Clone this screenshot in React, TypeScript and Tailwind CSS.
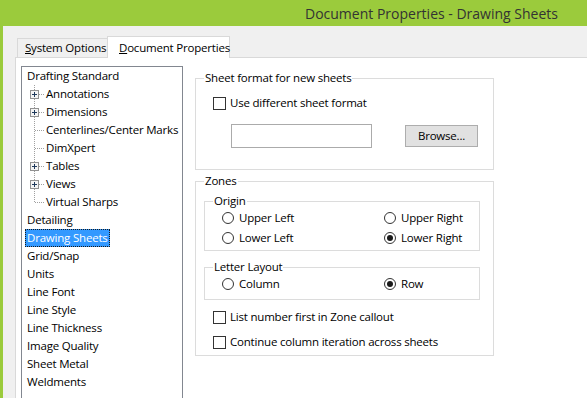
import React from "react";

const children = [
  { label: "Annotations", plus: true },
  { label: "Dimensions", plus: true },
  { label: "Centerlines/Center Marks", plus: false },
  { label: "DimXpert", plus: false },
  { label: "Tables", plus: true },
  { label: "Views", plus: true },
  { label: "Virtual Sharps", plus: false },
];

const rootItems = [
  "Detailing",
  "Drawing Sheets",
  "Grid/Snap",
  "Units",
  "Line Font",
  "Line Style",
  "Line Thickness",
  "Image Quality",
  "Sheet Metal",
  "Weldments",
];

const TreeConnector = ({ plus, last }: { plus: boolean; last: boolean }) => (
  <svg width="22" height="18" className="shrink-0">
    <line
      x1="12.5"
      y1="0"
      x2="12.5"
      y2={last ? 9 : 18}
      stroke="#a0a0a0"
      strokeDasharray="1 1"
    />
    <line x1="13" y1="9.5" x2="22" y2="9.5" stroke="#a0a0a0" strokeDasharray="1 1" />
    {plus && (
      <>
        <rect x="8.5" y="5.5" width="8" height="8" fill="#f4f4f4" stroke="#919191" />
        <line x1="10" y1="9.5" x2="15" y2="9.5" stroke="#1e395b" />
        <line x1="12.5" y1="7" x2="12.5" y2="12" stroke="#1e395b" />
      </>
    )}
  </svg>
);

const CheckBox = ({ label }: { label: string }) => (
  <div className="flex items-center h-[18px]">
    <span className="w-[13px] h-[13px] border border-[#333] bg-white shrink-0" />
    <span className="ml-[4px]">{label}</span>
  </div>
);

const Radio = ({ label, checked }: { label: string; checked?: boolean }) => (
  <div className="flex items-center h-[20px]">
    <span className="w-[12px] h-[12px] rounded-full border border-[#333] bg-white shrink-0 flex items-center justify-center">
      {checked && <span className="w-[6px] h-[6px] rounded-full bg-[#1a1a1a]" />}
    </span>
    <span className="ml-[5px]">{label}</span>
  </div>
);

const GroupLabel = ({ text }: { text: string }) => (
  <span className="absolute -top-[10px] left-[8px] bg-white px-[1px] leading-[18px]">
    {text}
  </span>
);

export default function App() {
  return (
    <div className="w-[587px] h-[398px] overflow-hidden bg-[#f0f0f0] flex flex-col font-['Open_Sans',sans-serif] text-[11.5px] tracking-[-0.2px] text-black">
      <div className="h-[26px] shrink-0 bg-[#9bcb3c] pl-[305px] flex items-center text-[14px] tracking-normal text-[#333] whitespace-nowrap">
        Document Properties - Drawing Sheets
      </div>
      <div className="flex-1 min-h-0 flex flex-col border-l-[3px] border-[#9bcb3c]">
        <div className="h-[31px] shrink-0 pl-[14px] flex items-end">
          <div className="h-[19px] w-[90px] pl-[7px] border-t border-l border-[#d9d9d9] bg-[#f0f0f0] flex items-center whitespace-nowrap">
            <span>
              <span className="underline">S</span>ystem Options
            </span>
          </div>
          <div className="relative z-10 -mb-px h-[22px] w-[123px] pl-[11px] border-t border-l border-r border-[#d9d9d9] bg-white flex items-center whitespace-nowrap">
            <span>
              <span className="underline">D</span>ocument Properties
            </span>
          </div>
        </div>
        <div className="flex-1 min-h-0 ml-[12px] bg-white border-l border-t border-[#d9d9d9] flex items-start">
          {/* tree */}
          <div className="ml-[5px] mt-[8px] w-[162px] h-[400px] shrink-0 border border-[#828790] bg-white pl-[3px] whitespace-nowrap">
            <div className="h-[18px] flex items-center">
              <span className="px-[2px]">Drafting Standard</span>
            </div>
            {children.map((c, i) => (
              <div key={c.label} className="h-[18px] flex items-center -ml-[3px]">
                <TreeConnector plus={c.plus} last={i === children.length - 1} />
                <span className="px-[2px]">{c.label}</span>
              </div>
            ))}
            {rootItems.map((r) => (
              <div key={r} className="h-[18px] flex items-center">
                {r === "Drawing Sheets" ? (
                  <span className="px-[1px] h-[18px] flex items-center bg-[#3399ff] text-white border border-dotted border-[#1a1a1a]">
                    {r}
                  </span>
                ) : (
                  <span className="px-[2px]">{r}</span>
                )}
              </div>
            ))}
          </div>

          {/* options */}
          <div className="ml-[12px] mt-[20px] w-[299px] shrink-0 flex flex-col">
            <div className="relative h-[92px] border border-[#dcdcdc] pt-[15px] pl-[17px]">
              <GroupLabel text="Sheet format for new sheets" />
              <CheckBox label="Use different sheet format" />
              <div className="mt-[12px] h-[24px] flex items-center">
                <div className="ml-[18px] w-[141px] h-[24px] border border-[#ababab] bg-white" />
                <button className="ml-[33px] w-[73px] h-[22px] border border-[#adadad] bg-[#e1e1e1] flex items-center justify-center">
                  Browse...
                </button>
              </div>
            </div>

            <div className="relative mt-[11px] h-[175px] border border-[#dcdcdc] pt-[19px] pl-[8px]">
              <GroupLabel text="Zones" />
              <div className="relative w-[276px] h-[50px] border border-[#dcdcdc] pt-[6px] pl-[17px]">
                <GroupLabel text="Origin" />
                <div className="grid grid-cols-[162px_1fr]">
                  <Radio label="Upper Left" />
                  <Radio label="Upper Right" />
                  <Radio label="Lower Left" />
                  <Radio label="Lower Right" checked />
                </div>
              </div>
              <div className="relative mt-[16px] w-[276px] h-[33px] border border-[#dcdcdc] pt-[6px] pl-[17px]">
                <GroupLabel text="Letter Layout" />
                <div className="grid grid-cols-[162px_1fr]">
                  <Radio label="Column" />
                  <Radio label="Row" checked />
                </div>
              </div>
              <div className="mt-[8px] ml-[9px]">
                <CheckBox label="List number first in Zone callout" />
              </div>
              <div className="mt-[7px] ml-[9px]">
                <CheckBox label="Continue column iteration across sheets" />
              </div>
            </div>
          </div>
        </div>
      </div>
    </div>
  );
}
